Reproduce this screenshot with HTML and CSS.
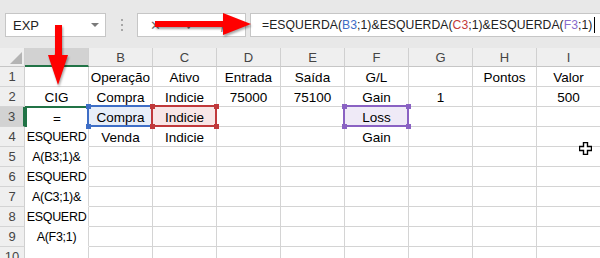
FILE: index.html
```html
<!DOCTYPE html>
<html lang="pt">
<head>
  <meta charset="UTF-8" />
  <title>ESQUERDA</title>
  <link rel="stylesheet" href="styles.css">
</head>
<body>
  <div class="app">
    <div class="toolbar">
      <div class="namebox">
        <span>EXP</span>
        <span class="drop"></span>
      </div>
      <div class="grip"><i></i><i></i><i></i></div>
      <div class="fbuttons">
        <span class="btn">&#x2715;</span>
        <span class="btn check">&#x2713;</span>
        <span class="btn fx"><em>f</em>x</span>
      </div>
      <div class="formula">=ESQUERDA(<span class="blue">B3</span>;1)&amp;ESQUERDA(<span class="red">C3</span>;1)&amp;ESQUERDA(<span class="purple">F3</span>;1)<span class="caret"></span></div>
    </div>

    <div class="sheet">
      <div class="corner"><span></span></div>
      <div class="ch sel">A</div>
      <div class="ch">B</div>
      <div class="ch">C</div>
      <div class="ch">D</div>
      <div class="ch">E</div>
      <div class="ch">F</div>
      <div class="ch">G</div>
      <div class="ch">H</div>
      <div class="ch">I</div>

      <div class="rh">1</div>
      <div class="c"></div><div class="c">Operação</div><div class="c">Ativo</div><div class="c">Entrada</div><div class="c">Saída</div><div class="c">G/L</div><div class="c"></div><div class="c">Pontos</div><div class="c">Valor</div>

      <div class="rh">2</div>
      <div class="c">CIG</div><div class="c">Compra</div><div class="c">Indicie</div><div class="c">75000</div><div class="c">75100</div><div class="c">Gain</div><div class="c">1</div><div class="c"></div><div class="c">500</div>

      <div class="rh sel">3</div>
      <div class="c active">=</div>
      <div class="c ref ref-blue">Compra<i class="h tl"></i><i class="h tr"></i><i class="h bl"></i><i class="h br"></i></div>
      <div class="c ref ref-red">Indicie<i class="h tl"></i><i class="h tr"></i><i class="h bl"></i><i class="h br"></i></div>
      <div class="c"></div><div class="c"></div>
      <div class="c ref ref-purple">Loss<i class="h tl"></i><i class="h tr"></i><i class="h bl"></i><i class="h br"></i></div>
      <div class="c"></div><div class="c"></div><div class="c"></div>

      <div class="rh">4</div>
      <div class="c edit">ESQUERD</div><div class="c">Venda</div><div class="c">Indicie</div><div class="c"></div><div class="c"></div><div class="c">Gain</div><div class="c"></div><div class="c"></div><div class="c"></div>

      <div class="rh">5</div>
      <div class="c edit">A(B3;1)&amp;</div><div class="c"></div><div class="c"></div><div class="c"></div><div class="c"></div><div class="c"></div><div class="c"></div><div class="c"></div><div class="c"></div>

      <div class="rh">6</div>
      <div class="c edit">ESQUERD</div><div class="c"></div><div class="c"></div><div class="c"></div><div class="c"></div><div class="c"></div><div class="c"></div><div class="c"></div><div class="c"></div>

      <div class="rh">7</div>
      <div class="c edit">A(C3;1)&amp;</div><div class="c"></div><div class="c"></div><div class="c"></div><div class="c"></div><div class="c"></div><div class="c"></div><div class="c"></div><div class="c"></div>

      <div class="rh">8</div>
      <div class="c edit">ESQUERD</div><div class="c"></div><div class="c"></div><div class="c"></div><div class="c"></div><div class="c"></div><div class="c"></div><div class="c"></div><div class="c"></div>

      <div class="rh">9</div>
      <div class="c edit">A(F3;1)</div><div class="c"></div><div class="c"></div><div class="c"></div><div class="c"></div><div class="c"></div><div class="c"></div><div class="c"></div><div class="c"></div>

      <div class="rh">10</div>
      <div class="c"></div><div class="c"></div><div class="c"></div><div class="c"></div><div class="c"></div><div class="c"></div><div class="c"></div><div class="c"></div><div class="c"></div>
    </div>

    <!-- red arrows drawn over the screenshot -->
    <svg class="arrow arrow-down" width="30" height="70" viewBox="0 0 30 70">
      <rect x="10" y="0" width="7" height="32" fill="#ff0000"/>
      <polygon points="3,30 23,30 13,60" fill="#ff0000"/>
    </svg>
    <svg class="arrow arrow-right" width="110" height="30" viewBox="0 0 110 30">
      <rect x="0" y="8" width="72" height="6" fill="#ff0000"/>
      <polygon points="68,0 68,22 96,11" fill="#ff0000"/>
    </svg>

    <svg class="cursor" width="13" height="13" viewBox="0 0 13 13">
      <polygon points="4.5,0.5 8.5,0.5 8.5,4.5 12.5,4.5 12.5,8.5 8.5,8.5 8.5,12.5 4.5,12.5 4.5,8.5 0.5,8.5 0.5,4.5 4.5,4.5" fill="#fff" stroke="#000" stroke-width="1.4"/>
    </svg>
  </div>
</body>
</html>
```

FILE: styles.css
```css
* {
  margin: 0;
  padding: 0;
  box-sizing: border-box;
}

body {
  background: #ffffff;
  font-family: 'Liberation Sans', Arial, sans-serif;
  color: #000;
}

.app {
  position: relative;
  width: 600px;
  height: 258px;
  overflow: hidden;
}

/* formula bar */
.toolbar {
  height: 48px;
  background: #e8e8e8;
  display: flex;
  align-items: center;
  padding: 2px 0 0 5px;
}

.namebox {
  width: 101px;
  height: 24px;
  background: #fff;
  border: 1px solid #c6c6c6;
  display: flex;
  align-items: center;
  justify-content: space-between;
  padding: 0 6px 0 7px;
  font-size: 13px;
  color: #222;
}

.drop {
  width: 0;
  height: 0;
  border-left: 4px solid transparent;
  border-right: 4px solid transparent;
  border-top: 4px solid #7a7a7a;
}

.grip {
  width: 31px;
  display: flex;
  flex-direction: column;
  align-items: center;
  gap: 3px;
}

.grip i {
  width: 2px;
  height: 2px;
  background: #a6a6a6;
}

.fbuttons {
  width: 109px;
  height: 24px;
  background: #fff;
  border: 1px solid #c6c6c6;
  display: flex;
  align-items: center;
  padding-left: 12px;
  gap: 24px;
  color: #6d6d6d;
  font-size: 13px;
}

.fbuttons .check {
  font-size: 14px;
}

.fbuttons .fx em {
  font-family: 'Liberation Serif', serif;
}

.formula {
  margin-left: 4px;
  flex: 1;
  height: 24px;
  background: #fff;
  border: 1px solid #c6c6c6;
  border-right: none;
  display: flex;
  align-items: center;
  padding-left: 11px;
  font-size: 12.2px;
  letter-spacing: 0.05px;
  color: #222;
  white-space: nowrap;
}

.formula .blue { color: #3e6ec6; }
.formula .red { color: #c33a3a; }
.formula .purple { color: #8a6ccb; }

.caret {
  width: 1px;
  height: 16px;
  background: #000;
  margin-left: 2px;
}

/* sheet grid */
.sheet {
  display: grid;
  grid-template-columns: 25px repeat(9, 64px);
  grid-template-rows: 19px repeat(10, 20px);
  background: #fff;
}

.corner,
.ch,
.rh {
  background: #efefef;
  border-right: 1px solid #d0d0d0;
  border-bottom: 1px solid #c6c6c6;
  color: #444;
  font-size: 13px;
  display: flex;
  align-items: center;
  justify-content: center;
}

.corner {
  position: relative;
  align-items: flex-end;
  justify-content: flex-end;
  padding: 0 2px 2px 0;
}

.corner span {
  width: 0;
  height: 0;
  border-left: 12px solid transparent;
  border-bottom: 12px solid #b4b4b4;
}

.ch.sel {
  background: #d2d2d2;
  border-bottom: 2px solid #217346;
}

.rh {
  background: #efefef;
  border-bottom: 1px solid #d4d4d4;
}

.rh.sel {
  background: #d2d2d2;
  border-right: 2px solid #217346;
}

.c {
  position: relative;
  border-right: 1px solid #d4d4d4;
  border-bottom: 1px solid #d4d4d4;
  font-size: 13.5px;
  display: flex;
  align-items: center;
  justify-content: center;
  white-space: nowrap;
  padding-top: 1px;
}

.c.active {
  border: 2px solid #217346;
  border-bottom: none;
  margin: -1px 0 0 0;
}

.c.edit {
  border-bottom-color: #fff;
  font-size: 12.5px;
  letter-spacing: -0.3px;
}

/* range reference highlights */
.ref::before {
  content: '';
  position: absolute;
  left: -2px;
  top: -2px;
  right: -1px;
  bottom: -1px;
  border: 2px solid var(--rc);
  background: var(--rf);
}

.ref-blue { --rc: #3e6ec6; --rf: #e7eef9; z-index: 1; }
.ref-red { --rc: #c0393b; --rf: #f8e6e6; z-index: 2; }
.ref-purple { --rc: #8a62c3; --rf: #efeaf7; z-index: 1; }

.c.ref {
  isolation: isolate;
}

.c.ref::before {
  z-index: -1;
}

.h {
  position: absolute;
  width: 5px;
  height: 5px;
  background: var(--rc);
}

.h.tl { left: -3px; top: -3px; }
.h.tr { right: -3px; top: -3px; }
.h.bl { left: -3px; bottom: -3px; }
.h.br { right: -3px; bottom: -3px; }

/* overlays */
.arrow {
  position: absolute;
  filter: drop-shadow(1px 2px 1px rgba(0, 0, 0, 0.35));
}

.arrow-down {
  left: 45px;
  top: 25px;
}

.arrow-right {
  left: 155px;
  top: 13px;
}

.cursor {
  position: absolute;
  left: 579px;
  top: 142px;
}
```
